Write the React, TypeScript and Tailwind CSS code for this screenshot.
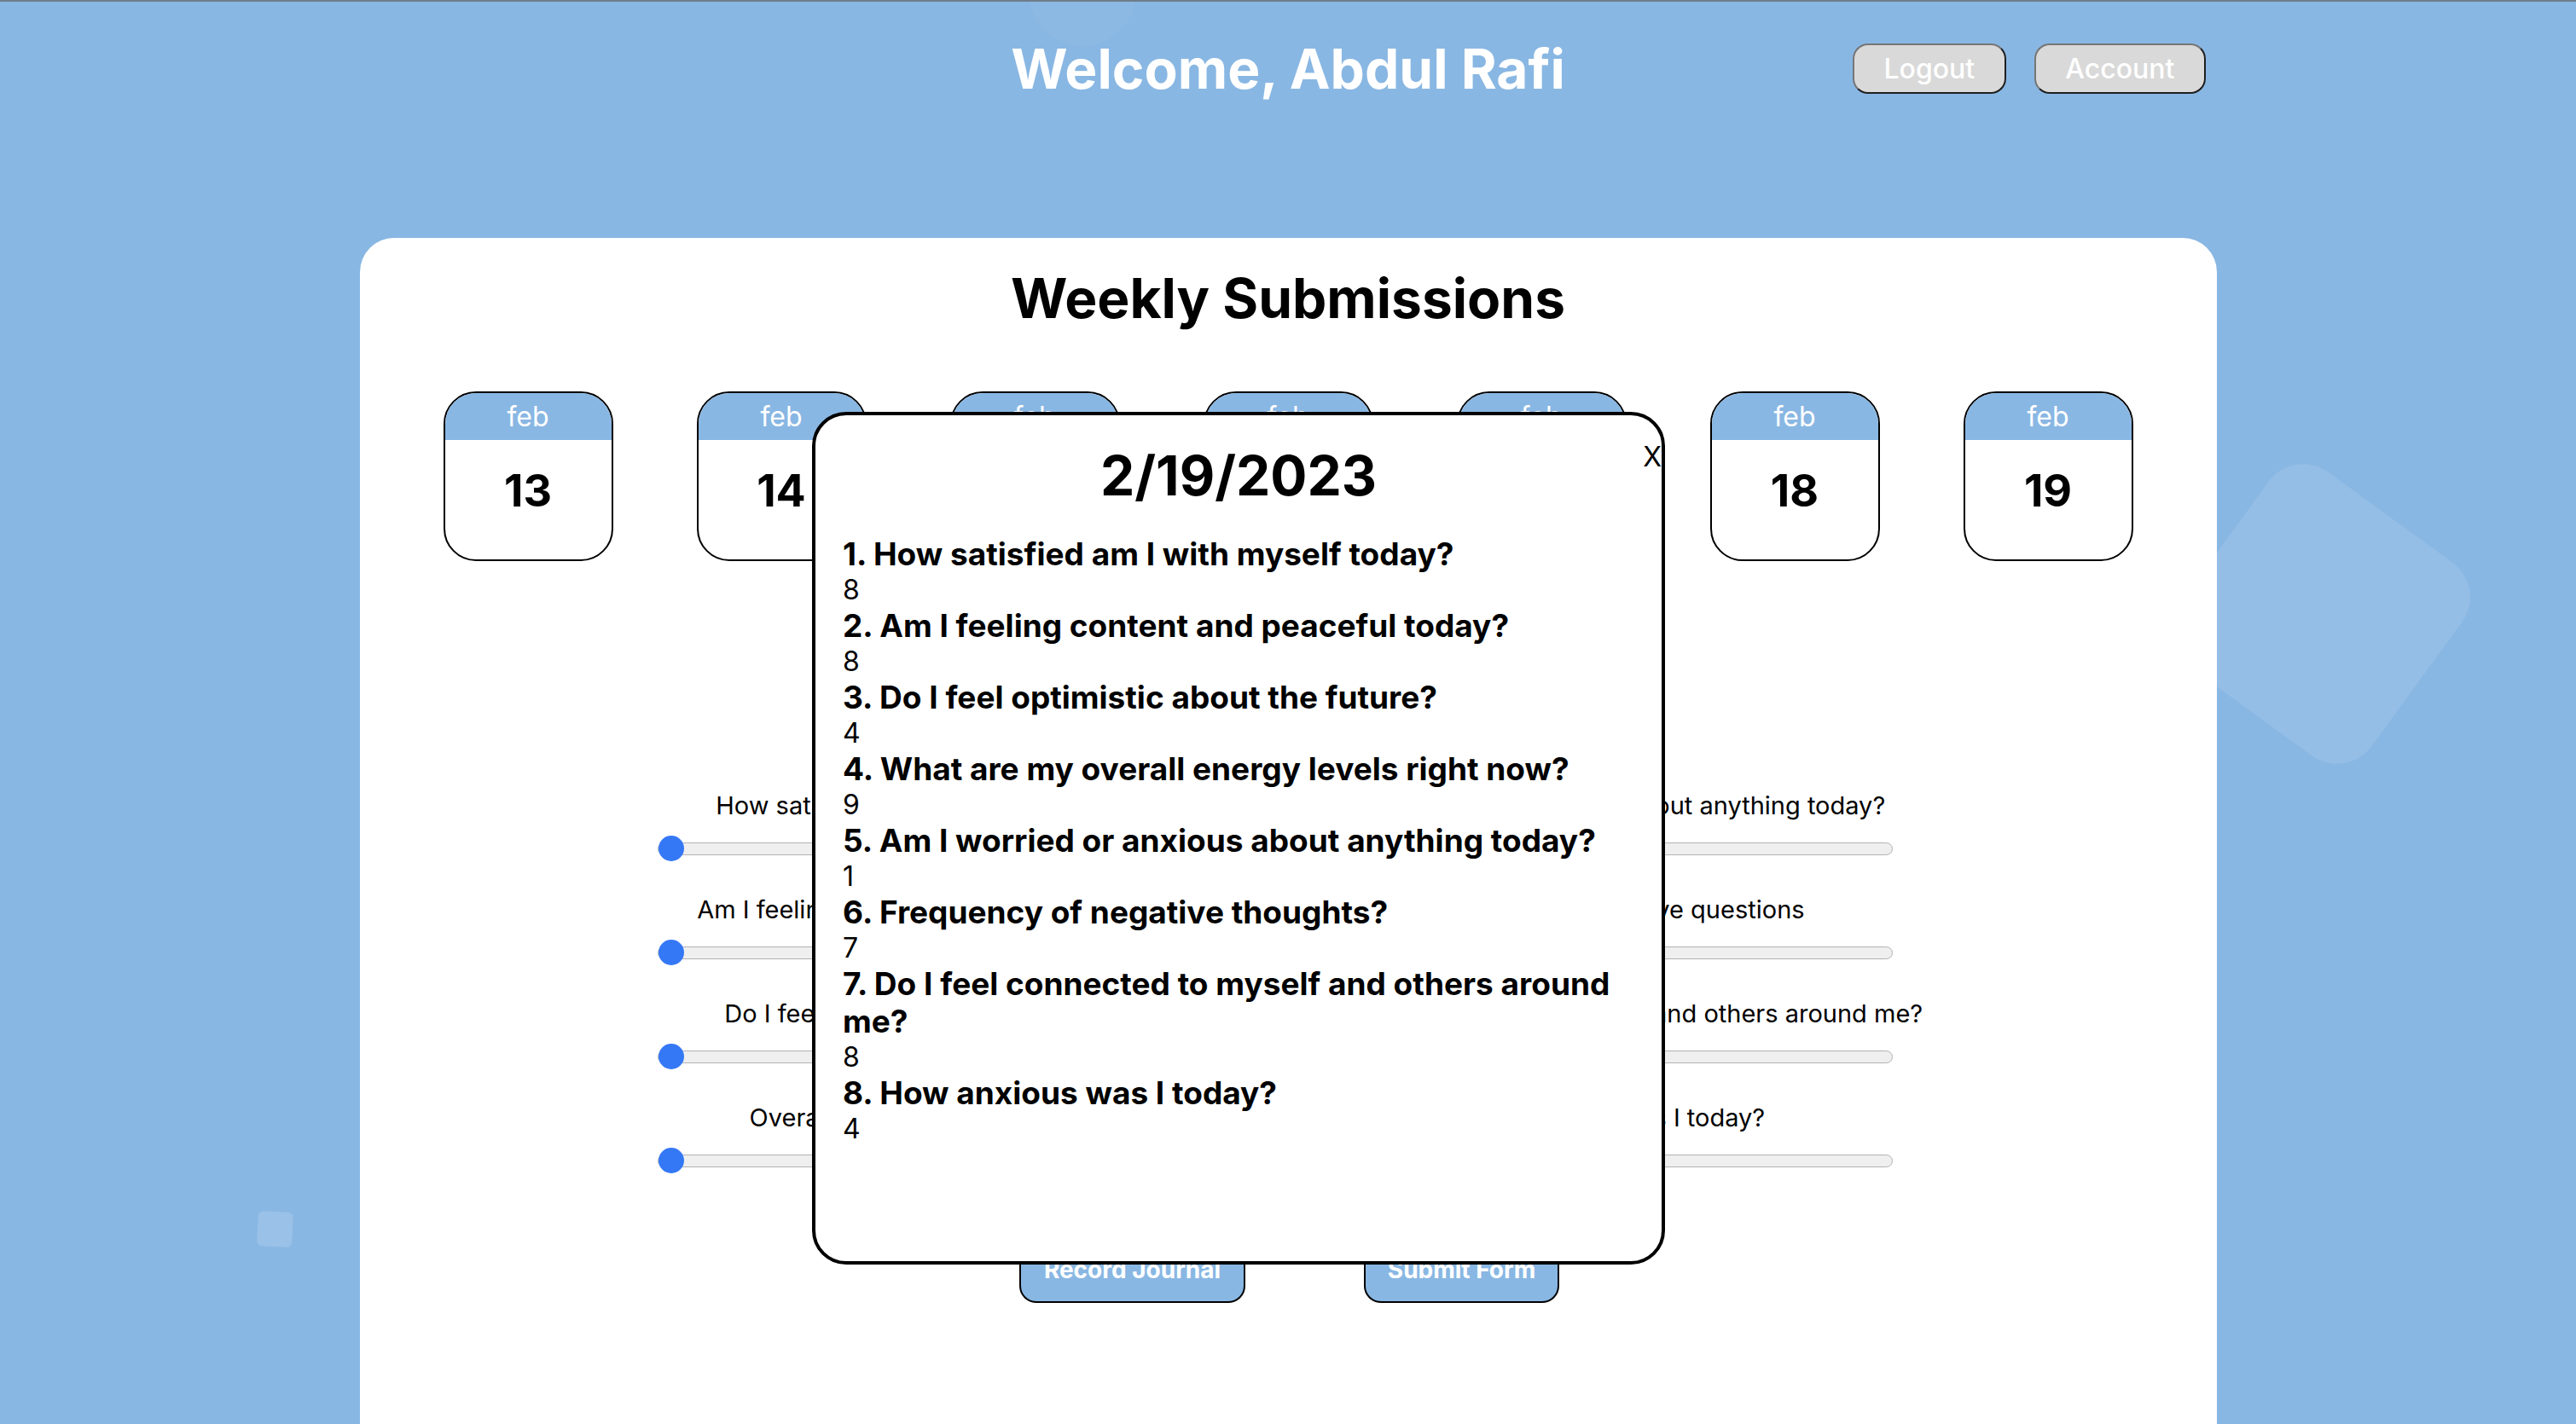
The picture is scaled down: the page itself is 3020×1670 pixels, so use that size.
const days = [13, 14, 15, 16, 17, 18, 19];

const leftQuestions = [
  "How satisfied am I with myself today?",
  "Am I feeling content and peaceful today?",
  "Do I feel optimistic about the future?",
  "Overall energy levels right now?",
];

const rightQuestions = [
  "Am I worried or anxious about anything today?",
  "Frequency of negative questions",
  "Do I feel connected to myself and others around me?",
  "How anxious was I today?",
];

const answers = [
  { q: "1. How satisfied am I with myself today?", a: 8 },
  { q: "2. Am I feeling content and peaceful today?", a: 8 },
  { q: "3. Do I feel optimistic about the future?", a: 4 },
  { q: "4. What are my overall energy levels right now?", a: 9 },
  { q: "5. Am I worried or anxious about anything today?", a: 1 },
  { q: "6. Frequency of negative thoughts?", a: 7 },
  { q: "7. Do I feel connected to myself and others around me?", a: 8 },
  { q: "8. How anxious was I today?", a: 4 },
];

function Slider({ label }: { label: string }) {
  return (
    <div className="flex flex-col items-center gap-[19px]">
      <span className="whitespace-nowrap text-[29px] leading-[33px] text-black">{label}</span>
      <div className="flex h-[30px] items-center">
        <div className="relative h-[15px] w-[654px] rounded-full border-[1.5px] border-[#b2b2b2] bg-[#efefef]">
          <div className="absolute left-0 top-1/2 h-[30px] w-[30px] -translate-y-1/2 rounded-full bg-[#3478f6]" />
        </div>
      </div>
    </div>
  );
}

function DayCard({ day }: { day: number }) {
  return (
    <div className="flex h-[199px] w-[199px] flex-col overflow-hidden rounded-[38px] border-2 border-black bg-white">
      <div className="flex h-[55px] items-center justify-center bg-[#89b7e3] text-[32px] leading-[39px] text-white">feb</div>
      <div className="pt-[28px] text-center text-[52px] font-bold leading-[63px] text-black">{day}</div>
    </div>
  );
}

export default function App() {
  return (
    <div className="relative h-[1670px] overflow-hidden border-t-2 border-[#6e7d8a] bg-[#89b7e3] font-['Inter',sans-serif]">
      {/* floating background squares */}
      <div className="absolute left-[1207px] top-[-72px] h-[124px] w-[124px] rounded-full bg-white/[0.03]" />
      <div className="absolute left-[2580px] top-[578px] h-[280px] w-[280px] rotate-[36deg] rounded-[50px] bg-white/10" />
      <div className="absolute left-[302px] top-[1419px] h-[41px] w-[41px] rotate-[3deg] rounded-[6px] bg-white/15" />

      <header className="relative grid grid-cols-[1fr_auto_1fr] items-center pt-[40px]">
        <div />
        <h1 className="text-[64px] font-bold leading-[77px] text-white">Welcome, Abdul Rafi</h1>
        <div className="flex gap-[33px] pl-[337px]">
          <button className="h-[59px] w-[180px] rounded-[18px] border-2 border-t-[#767676] border-l-[#767676] border-b-[#1f1f1f] border-r-[#1f1f1f] bg-[#d9d9d9] text-[32px] font-medium text-white">
            Logout
          </button>
          <button className="h-[59px] w-[201px] rounded-[18px] border-2 border-t-[#767676] border-l-[#767676] border-b-[#1f1f1f] border-r-[#1f1f1f] bg-[#d9d9d9] text-[32px] font-medium text-white">
            Account
          </button>
        </div>
      </header>

      <main className="relative mx-auto mt-[160px] h-[1500px] w-[2177px] rounded-[40px] bg-white pt-[32px]">
        <h2 className="text-center text-[64px] font-bold leading-[77px] text-black">Weekly Submissions</h2>

        <div className="mt-[71px] flex justify-evenly">
          {days.map((d) => (
            <DayCard key={d} day={d} />
          ))}
        </div>

        <div className="ml-[318px] mt-[270px] grid grid-cols-[716px_716px] gap-x-[78px]">
          <div className="flex flex-col gap-[40px]">
            {leftQuestions.map((q) => (
              <Slider key={q} label={q} />
            ))}
          </div>
          <div className="flex flex-col gap-[40px]">
            {rightQuestions.map((q) => (
              <Slider key={q} label={q} />
            ))}
          </div>
        </div>

        <div className="mt-[74px] flex justify-center gap-[139px] pl-[3px]">
          <button className="h-[78px] w-[265px] rounded-[20px] border-2 border-black bg-[#89b7e3] text-[28px] font-bold text-white">
            Record Journal
          </button>
          <button className="h-[78px] w-[229px] rounded-[20px] border-2 border-black bg-[#89b7e3] text-[28px] font-bold text-white">
            Submit Form
          </button>
        </div>
      </main>

      {/* submission details popup */}
      <div className="absolute left-[952px] top-[481px] h-[1000px] w-[1000px] rounded-[40px] border-4 border-black bg-white px-[32px] pt-[32px]">
        <button className="absolute right-0 top-[29px] text-[32px] leading-[39px] text-black">X</button>
        <h2 className="mb-[32px] text-center text-[64px] font-bold leading-[77px] text-black">2/19/2023</h2>
        <div className="flex flex-col">
          {answers.map((item) => (
            <div key={item.q}>
              <p className="text-[37px] font-bold leading-[44px] text-black">{item.q}</p>
              <p className="text-[32px] leading-[40px] text-black">{item.a}</p>
            </div>
          ))}
        </div>
      </div>
    </div>
  );
}
